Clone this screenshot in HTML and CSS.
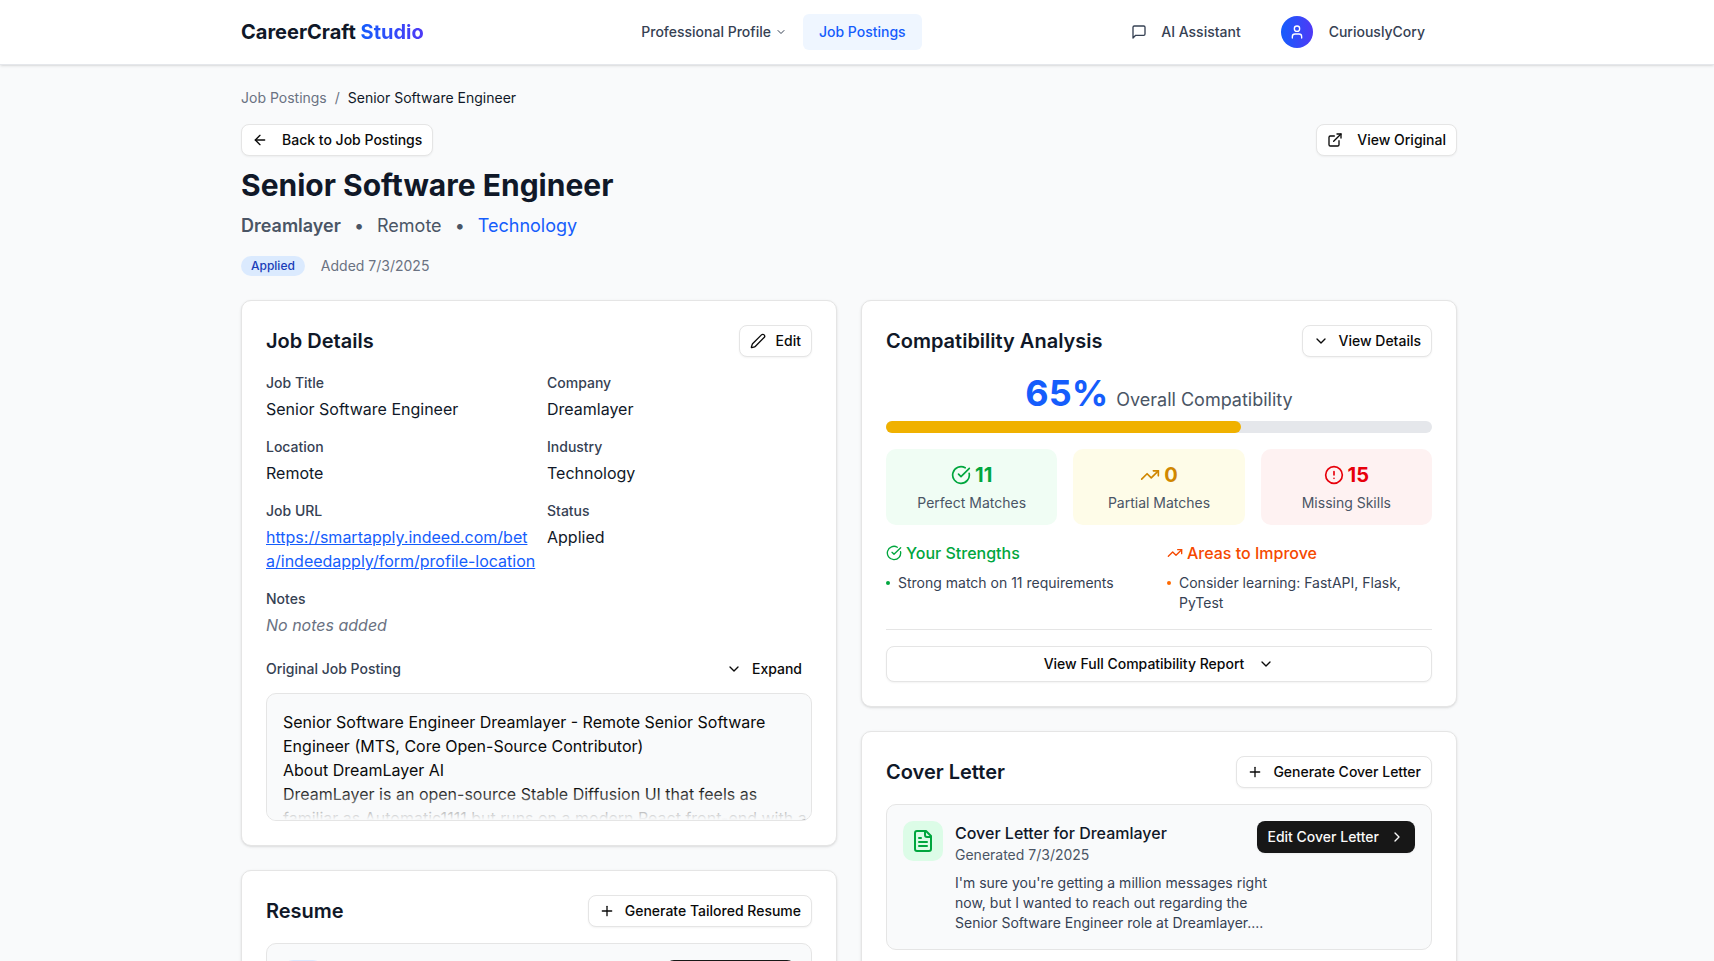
FILE: index.html
```html
<!DOCTYPE html>
<html lang="en">
<head>
    <meta charset="UTF-8">
    <meta name="viewport" content="width=device-width, initial-scale=1.0">
    <title>Senior Software Engineer - CareerCraft Studio</title>
    <link rel="stylesheet" href="styles.css">
</head>
<body>
<header class="site-header">
    <div class="container header-row">
        <a href="#" class="logo">CareerCraft <span>Studio</span></a>
        <nav class="main-nav">
            <a href="#" class="nav-link">Professional Profile
                <svg class="icon icon-xs" viewBox="0 0 24 24"><path d="m6 9 6 6 6-6"/></svg>
            </a>
            <a href="#" class="nav-link active">Job Postings</a>
        </nav>
        <div class="user-nav">
            <button type="button" class="assistant">
                <svg class="icon" viewBox="0 0 24 24"><path d="M21 15a2 2 0 0 1-2 2H7l-4 4V5a2 2 0 0 1 2-2h14a2 2 0 0 1 2 2z"/></svg>
                AI Assistant
            </button>
            <button type="button" class="user">
                <span class="avatar">
                    <svg class="icon" viewBox="0 0 24 24"><path d="M19 21v-2a4 4 0 0 0-4-4H9a4 4 0 0 0-4 4v2"/><circle cx="12" cy="7" r="4"/></svg>
                </span>
                CuriouslyCory
            </button>
        </div>
    </div>
</header>

<main class="container">
    <nav class="breadcrumb">
        <a href="#">Job Postings</a>
        <span>/</span>
        <span class="current">Senior Software Engineer</span>
    </nav>

    <div class="top-actions">
        <a href="#" class="btn wide-gap">
            <svg class="icon" viewBox="0 0 24 24"><path d="m12 19-7-7 7-7"/><path d="M19 12H5"/></svg>
            Back to Job Postings
        </a>
        <a href="#" class="btn wide-gap">
            <svg class="icon" viewBox="0 0 24 24"><path d="M15 3h6v6"/><path d="M10 14 21 3"/><path d="M18 13v6a2 2 0 0 1-2 2H5a2 2 0 0 1-2-2V8a2 2 0 0 1 2-2h6"/></svg>
            View Original
        </a>
    </div>

    <h1>Senior Software Engineer</h1>
    <div class="job-meta">
        <strong>Dreamlayer</strong>
        <span>•</span>
        <span>Remote</span>
        <span>•</span>
        <span class="industry">Technology</span>
    </div>
    <div class="job-status">
        <span class="badge">Applied</span>
        <span>Added 7/3/2025</span>
    </div>

    <div class="columns">
        <div class="column">
            <section class="card">
                <div class="card-header">
                    <h2>Job Details</h2>
                    <button type="button" class="btn">
                        <svg class="icon" viewBox="0 0 24 24"><path d="M21.174 6.812a1 1 0 0 0-3.986-3.987L3.842 16.174a2 2 0 0 0-.5.83l-1.321 4.352a.5.5 0 0 0 .623.622l4.353-1.32a2 2 0 0 0 .83-.497z"/></svg>
                        Edit
                    </button>
                </div>
                <dl class="details">
                    <div><dt>Job Title</dt><dd>Senior Software Engineer</dd></div>
                    <div><dt>Company</dt><dd>Dreamlayer</dd></div>
                    <div><dt>Location</dt><dd>Remote</dd></div>
                    <div><dt>Industry</dt><dd>Technology</dd></div>
                    <div><dt>Job URL</dt><dd><a href="#">https://smartapply.indeed.com/bet<br>a/indeedapply/form/profile-location</a></dd></div>
                    <div><dt>Status</dt><dd>Applied</dd></div>
                    <div class="full"><dt>Notes</dt><dd class="empty">No notes added</dd></div>
                </dl>
                <div class="posting-header">
                    <h3>Original Job Posting</h3>
                    <button type="button" class="btn ghost">
                        <svg class="icon" viewBox="0 0 24 24"><path d="m6 9 6 6 6-6"/></svg>
                        Expand
                    </button>
                </div>
                <div class="posting">
                    <p>Senior Software Engineer Dreamlayer - Remote Senior Software Engineer (MTS, Core Open-Source Contributor)</p>
                    <p>About DreamLayer AI</p>
                    <p>DreamLayer is an open-source Stable Diffusion UI that feels as familiar as Automatic1111 but runs on a modern React front-end with a</p>
                </div>
            </section>

            <section class="card">
                <div class="card-header">
                    <h2>Resume</h2>
                    <button type="button" class="btn">
                        <svg class="icon" viewBox="0 0 24 24"><path d="M5 12h14"/><path d="M12 5v14"/></svg>
                        Generate Tailored Resume
                    </button>
                </div>
                <div class="document">
                    <span class="doc-icon blue">
                        <svg class="icon icon-lg" viewBox="0 0 24 24"><path d="M15 2H6a2 2 0 0 0-2 2v16a2 2 0 0 0 2 2h12a2 2 0 0 0 2-2V7Z"/><path d="M14 2v4a2 2 0 0 0 2 2h4"/><path d="M10 9H8"/><path d="M16 13H8"/><path d="M16 17H8"/></svg>
                    </span>
                    <div class="doc-text">
                        <h3>Resume for Dreamlayer</h3>
                        <p class="date">Generated 7/3/2025</p>
                    </div>
                    <button type="button" class="btn dark">
                        Edit Resume
                        <svg class="icon" viewBox="0 0 24 24"><path d="m9 18 6-6-6-6"/></svg>
                    </button>
                </div>
            </section>
        </div>

        <div class="column">
            <section class="card">
                <div class="card-header">
                    <h2>Compatibility Analysis</h2>
                    <button type="button" class="btn">
                        <svg class="icon" viewBox="0 0 24 24"><path d="m6 9 6 6 6-6"/></svg>
                        View Details
                    </button>
                </div>
                <div class="score"><strong>65%</strong> Overall Compatibility</div>
                <div class="progress"><div class="progress-fill" style="width: 65%"></div></div>

                <div class="stats">
                    <div class="stat green">
                        <div class="stat-value">
                            <svg class="icon icon-md" viewBox="0 0 24 24"><path d="M21.801 10A10 10 0 1 1 17 3.335"/><path d="m9 11 3 3L22 4"/></svg>
                            11
                        </div>
                        <div class="stat-label">Perfect Matches</div>
                    </div>
                    <div class="stat yellow">
                        <div class="stat-value">
                            <svg class="icon icon-md" viewBox="0 0 24 24"><path d="M16 7h6v6"/><path d="m22 7-8.5 8.5-5-5L2 17"/></svg>
                            0
                        </div>
                        <div class="stat-label">Partial Matches</div>
                    </div>
                    <div class="stat red">
                        <div class="stat-value">
                            <svg class="icon icon-md" viewBox="0 0 24 24"><circle cx="12" cy="12" r="10"/><path d="M12 8v4"/><path d="M12 16h.01"/></svg>
                            15
                        </div>
                        <div class="stat-label">Missing Skills</div>
                    </div>
                </div>

                <div class="insights">
                    <div class="strengths">
                        <h3>
                            <svg class="icon" viewBox="0 0 24 24"><path d="M21.801 10A10 10 0 1 1 17 3.335"/><path d="m9 11 3 3L22 4"/></svg>
                            Your Strengths
                        </h3>
                        <ul>
                            <li>Strong match on 11 requirements</li>
                        </ul>
                    </div>
                    <div class="improve">
                        <h3>
                            <svg class="icon" viewBox="0 0 24 24"><path d="M16 7h6v6"/><path d="m22 7-8.5 8.5-5-5L2 17"/></svg>
                            Areas to Improve
                        </h3>
                        <ul>
                            <li>Consider learning: FastAPI, Flask, PyTest</li>
                        </ul>
                    </div>
                </div>

                <div class="report">
                    <button type="button" class="btn wide-gap block">
                        View Full Compatibility Report
                        <svg class="icon" viewBox="0 0 24 24"><path d="m6 9 6 6 6-6"/></svg>
                    </button>
                </div>
            </section>

            <section class="card">
                <div class="card-header">
                    <h2>Cover Letter</h2>
                    <button type="button" class="btn">
                        <svg class="icon" viewBox="0 0 24 24"><path d="M5 12h14"/><path d="M12 5v14"/></svg>
                        Generate Cover Letter
                    </button>
                </div>
                <div class="document">
                    <span class="doc-icon green">
                        <svg class="icon icon-lg" viewBox="0 0 24 24"><path d="M15 2H6a2 2 0 0 0-2 2v16a2 2 0 0 0 2 2h12a2 2 0 0 0 2-2V7Z"/><path d="M14 2v4a2 2 0 0 0 2 2h4"/><path d="M10 9H8"/><path d="M16 13H8"/><path d="M16 17H8"/></svg>
                    </span>
                    <div class="doc-text">
                        <h3>Cover Letter for Dreamlayer</h3>
                        <p class="date">Generated 7/3/2025</p>
                        <p class="preview">I'm sure you're getting a million messages right<br>now, but I wanted to reach out regarding the<br>Senior Software Engineer role at Dreamlayer....</p>
                    </div>
                    <button type="button" class="btn dark">
                        Edit Cover Letter
                        <svg class="icon" viewBox="0 0 24 24"><path d="m9 18 6-6-6-6"/></svg>
                    </button>
                </div>
            </section>
        </div>
    </div>
</main>
</body>
</html>
```

FILE: styles.css
```css
* {
    box-sizing: border-box;
    margin: 0;
    padding: 0;
}

body {
    background-color: #f9fafb;
    color: #0a0a0a;
    font-family: Inter, "Liberation Sans", sans-serif;
    font-size: 16px;
    line-height: 24px;
    padding-right: 16px;
}

a {
    color: inherit;
    text-decoration: none;
}

button {
    font-family: inherit;
    cursor: pointer;
}

ul {
    list-style: none;
}

.container {
    max-width: 1280px;
    margin: 0 auto;
    padding: 0 32px;
}

/* icons */
.icon {
    width: 16px;
    height: 16px;
    flex-shrink: 0;
    fill: none;
    stroke: currentColor;
    stroke-width: 2;
    stroke-linecap: round;
    stroke-linejoin: round;
}

.icon-xs {
    width: 12px;
    height: 12px;
}

.icon-md {
    width: 20px;
    height: 20px;
}

.icon-lg {
    width: 24px;
    height: 24px;
}

/* header */
.site-header {
    margin-right: -16px;
    padding-right: 16px;
    background-color: white;
    border-bottom: 1px solid #e5e7eb;
    box-shadow: 0 1px 3px rgba(0, 0, 0, 0.1), 0 1px 2px -1px rgba(0, 0, 0, 0.1);
}

.header-row {
    display: flex;
    align-items: center;
    justify-content: space-between;
    height: 64px;
}

.logo {
    color: #101828;
    font-size: 20px;
    font-weight: 700;
    line-height: 28px;
}

.logo span {
    background: linear-gradient(to right, #155dfc, #4f39f6);
    background-clip: text;
    -webkit-background-clip: text;
    color: transparent;
}

.main-nav, .user-nav {
    display: flex;
    align-items: center;
}

.nav-link {
    display: flex;
    align-items: center;
    gap: 4px;
    padding: 8px 16px;
    border-radius: 6px;
    color: #364153;
    font-size: 14px;
    font-weight: 500;
    line-height: 20px;
}

.nav-link.active {
    background-color: #eff6ff;
    color: #155dfc;
}

.assistant, .user {
    display: flex;
    align-items: center;
    border: none;
    background: none;
    color: #364153;
    font-size: 14px;
    font-weight: 500;
    line-height: 20px;
}

.assistant {
    gap: 14px;
    padding: 8px;
}

.user {
    gap: 16px;
    padding: 0 32px;
}

.avatar {
    display: flex;
    align-items: center;
    justify-content: center;
    width: 32px;
    height: 32px;
    border-radius: 50%;
    background: linear-gradient(to right, #155dfc, #4f39f6);
    color: white;
}

/* page top */
.breadcrumb {
    display: flex;
    gap: 8px;
    padding-top: 23px;
    color: #6a7282;
    font-size: 14px;
    line-height: 20px;
}

.breadcrumb .current {
    color: #101828;
}

.top-actions {
    display: flex;
    justify-content: space-between;
    margin-top: 16px;
}

.btn {
    display: inline-flex;
    align-items: center;
    justify-content: center;
    gap: 10px;
    height: 32px;
    padding: 0 10px;
    border: 1px solid #e5e5e5;
    border-radius: 8px;
    background-color: white;
    box-shadow: 0 1px 2px rgba(0, 0, 0, 0.05);
    color: #0a0a0a;
    font-size: 14px;
    font-weight: 500;
    line-height: 20px;
    white-space: nowrap;
}

.btn.wide-gap {
    gap: 14px;
}

.btn.ghost {
    border: none;
    background: none;
    box-shadow: none;
}

.btn.dark {
    border: none;
    background-color: #171717;
    color: #fafafa;
}

.btn.block {
    width: 100%;
    height: 36px;
}

h1 {
    margin-top: 11px;
    color: #101828;
    font-size: 30px;
    font-weight: 700;
    line-height: 36px;
}

.job-meta {
    display: flex;
    gap: 13px;
    margin-top: 9px;
    color: #4a5565;
    font-size: 18px;
    line-height: 28px;
}

.job-meta strong {
    font-weight: 600;
}

.job-meta .industry {
    color: #155dfc;
}

.job-status {
    display: flex;
    align-items: center;
    gap: 16px;
    margin-top: 16px;
    color: #6a7282;
    font-size: 14px;
    line-height: 20px;
}

.badge {
    padding: 2px 10px;
    border-radius: 10px;
    background-color: #dbeafe;
    color: #193cb8;
    font-size: 12px;
    font-weight: 500;
    line-height: 16px;
}

/* cards */
.columns {
    display: grid;
    grid-template-columns: repeat(2, minmax(0, 1fr));
    align-items: start;
    gap: 24px;
    margin: 24px 0;
}

.column {
    display: grid;
    grid-template-columns: minmax(0, 1fr);
    gap: 24px;
}

.card {
    padding: 24px;
    border: 1px solid #e5e5e5;
    border-radius: 10px;
    background-color: white;
    box-shadow: 0 1px 3px rgba(0, 0, 0, 0.1), 0 1px 2px -1px rgba(0, 0, 0, 0.1);
}

.card-header {
    display: flex;
    align-items: center;
    justify-content: space-between;
    margin-bottom: 16px;
}

h2 {
    color: #101828;
    font-size: 20px;
    font-weight: 600;
    line-height: 28px;
}

/* job details */
.details {
    display: grid;
    grid-template-columns: repeat(2, minmax(0, 1fr));
    gap: 16px;
}

.details .full {
    grid-column: span 2;
}

.details dt, .posting-header h3 {
    color: #364153;
    font-size: 14px;
    font-weight: 500;
    line-height: 20px;
}

.details dd {
    margin-top: 4px;
    color: #101828;
}

.details dd a {
    color: #155dfc;
    text-decoration: underline;
    white-space: nowrap;
}

.details .empty {
    color: #6a7282;
    font-style: italic;
}

.posting-header {
    display: flex;
    align-items: center;
    justify-content: space-between;
    margin: 16px 0 8px;
}

.posting {
    position: relative;
    height: 128px;
    padding: 16px 4px 16px 16px;
    overflow: hidden;
    border: 1px solid #e5e5e5;
    border-radius: 10px;
    background-color: #f9fafb;
}

/* fade out the collapsed text */
.posting::after {
    content: "";
    position: absolute;
    left: 0;
    right: 0;
    bottom: 0;
    height: 32px;
    background: linear-gradient(to top, #f9fafb, rgba(249, 250, 251, 0));
}

/* compatibility */
.score {
    display: flex;
    align-items: baseline;
    justify-content: center;
    gap: 8px;
    height: 40px;
    color: #4a5565;
    font-size: 18px;
    line-height: 28px;
}

.score strong {
    color: #155dfc;
    font-size: 36px;
    font-weight: 700;
    line-height: 40px;
}

.progress {
    height: 12px;
    margin-top: 8px;
    border-radius: 6px;
    background-color: #e5e7eb;
}

.progress-fill {
    height: 12px;
    border-radius: 6px;
    background-color: #f0b100;
}

.stats {
    display: grid;
    grid-template-columns: repeat(3, 1fr);
    gap: 16px;
    margin-top: 16px;
}

.stat {
    padding: 12px;
    border-radius: 10px;
    text-align: center;
}

.stat-value {
    display: flex;
    align-items: center;
    justify-content: center;
    gap: 4px;
    font-size: 20px;
    font-weight: 700;
    line-height: 28px;
}

.stat-label {
    margin-top: 4px;
    color: #4a5565;
    font-size: 14px;
    line-height: 20px;
}

.stat.green {
    background-color: #f0fdf4;
}

.stat.green .stat-value {
    color: #00a63e;
}

.stat.yellow {
    background-color: #fefce8;
}

.stat.yellow .stat-value {
    color: #d08700;
}

.stat.red {
    background-color: #fef2f2;
}

.stat.red .stat-value {
    color: #e7000b;
}

.insights {
    display: grid;
    grid-template-columns: 1fr 1fr;
    gap: 16px;
    margin-top: 16px;
}

.insights h3 {
    display: flex;
    align-items: center;
    gap: 4px;
    margin-bottom: 8px;
    font-size: 16px;
    font-weight: 500;
}

.insights li {
    display: flex;
    gap: 8px;
    color: #364153;
    font-size: 14px;
    line-height: 20px;
}

.insights li::before {
    content: "";
    flex-shrink: 0;
    width: 4px;
    height: 4px;
    margin-top: 8px;
    border-radius: 50%;
    background-color: currentColor;
}

.strengths h3 {
    color: #00a63e;
}

.strengths li::before {
    background-color: #00a63e;
}

.improve h3 {
    color: #f54900;
}

.improve li::before {
    background-color: #ff6900;
}

.report {
    margin-top: 16px;
    padding-top: 16px;
    border-top: 1px solid #e5e5e5;
}

/* generated documents */
.document {
    display: flex;
    align-items: flex-start;
    gap: 12px;
    padding: 16px;
    border: 1px solid #e5e5e5;
    border-radius: 10px;
    background-color: #f9fafb;
}

.doc-icon {
    display: flex;
    padding: 8px;
    border-radius: 10px;
}

.doc-icon.green {
    background-color: #dcfce7;
    color: #00a63e;
}

.doc-icon.blue {
    background-color: #dbeafe;
    color: #155dfc;
}

.doc-text {
    flex: 1;
    min-width: 0;
}

.doc-text h3 {
    color: #101828;
    font-size: 16px;
    font-weight: 500;
}

.doc-text .date {
    color: #4a5565;
    font-size: 14px;
    line-height: 20px;
}

.doc-text .preview {
    margin-top: 8px;
    color: #364153;
    font-size: 14px;
    line-height: 20px;
    white-space: nowrap;
}
```
